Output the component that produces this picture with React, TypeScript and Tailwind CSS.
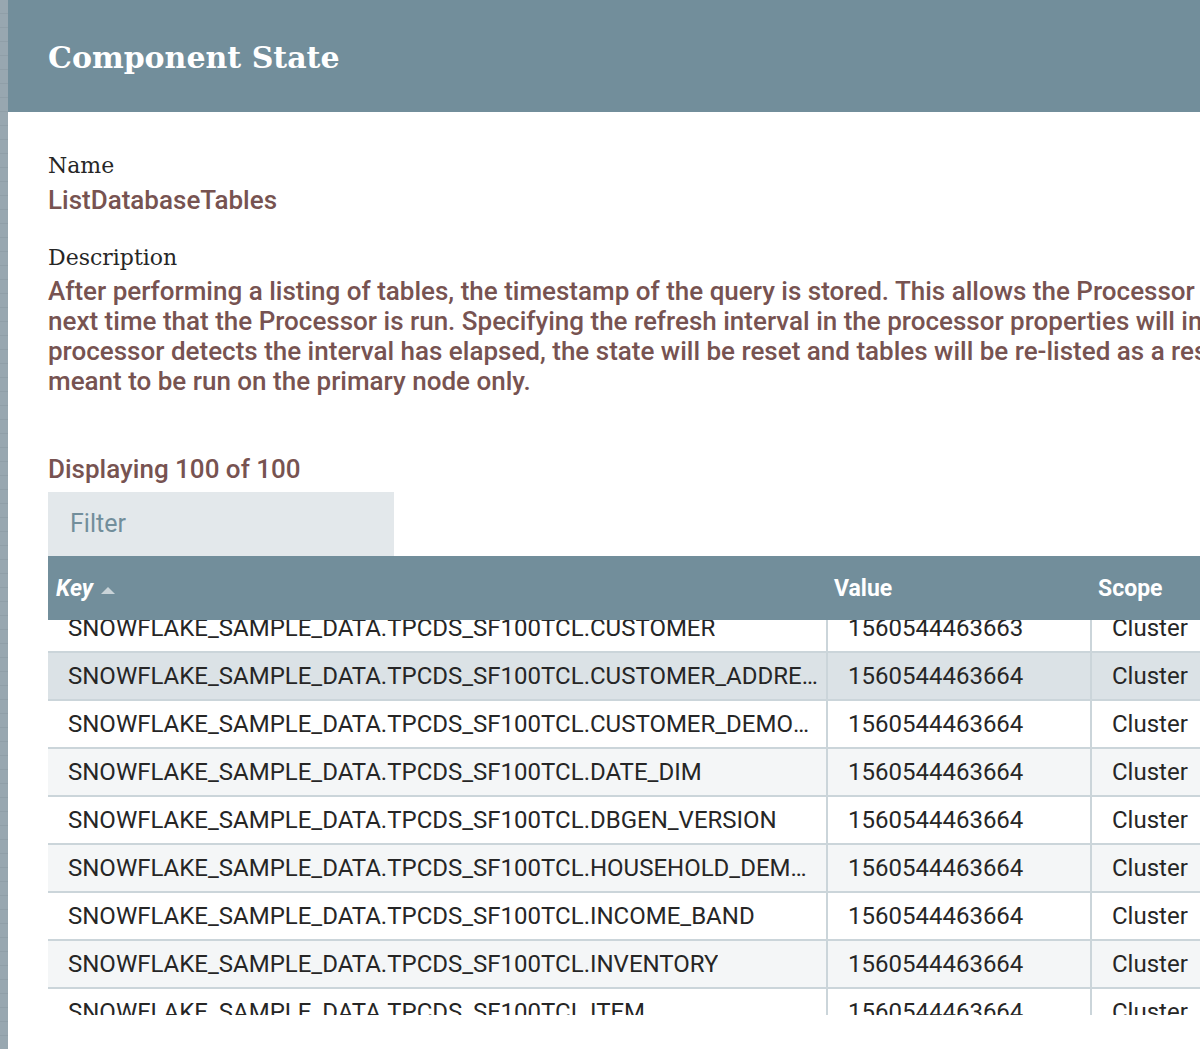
import React from "react";

const rows: { key: string; value: string; bg: string }[] = [
  { key: "SNOWFLAKE_SAMPLE_DATA.TPCDS_SF100TCL.CUSTOMER", value: "1560544463663", bg: "bg-white" },
  { key: "SNOWFLAKE_SAMPLE_DATA.TPCDS_SF100TCL.CUSTOMER_ADDRESS", value: "1560544463664", bg: "bg-[#dbe2e6]" },
  { key: "SNOWFLAKE_SAMPLE_DATA.TPCDS_SF100TCL.CUSTOMER_DEMOGRAPHICS", value: "1560544463664", bg: "bg-white" },
  { key: "SNOWFLAKE_SAMPLE_DATA.TPCDS_SF100TCL.DATE_DIM", value: "1560544463664", bg: "bg-[#f4f6f7]" },
  { key: "SNOWFLAKE_SAMPLE_DATA.TPCDS_SF100TCL.DBGEN_VERSION", value: "1560544463664", bg: "bg-white" },
  { key: "SNOWFLAKE_SAMPLE_DATA.TPCDS_SF100TCL.HOUSEHOLD_DEMOGRAPHICS", value: "1560544463664", bg: "bg-[#f4f6f7]" },
  { key: "SNOWFLAKE_SAMPLE_DATA.TPCDS_SF100TCL.INCOME_BAND", value: "1560544463664", bg: "bg-white" },
  { key: "SNOWFLAKE_SAMPLE_DATA.TPCDS_SF100TCL.INVENTORY", value: "1560544463664", bg: "bg-[#f4f6f7]" },
  { key: "SNOWFLAKE_SAMPLE_DATA.TPCDS_SF100TCL.ITEM", value: "1560544463664", bg: "bg-white" },
];

const descLines = [
  "After performing a listing of tables, the timestamp of the query is stored. This allows the Processor to not re-list tables the",
  "next time that the Processor is run. Specifying the refresh interval in the processor properties will indicate that when the",
  "processor detects the interval has elapsed, the state will be reset and tables will be re-listed as a result. This processor is",
  "meant to be run on the primary node only.",
];

export default function App() {
  return (
    <div className="flex w-[1200px] h-[1049px] overflow-hidden bg-white font-['Roboto',sans-serif]">
      <div className="w-[8px] shrink-0 bg-[repeating-linear-gradient(180deg,#98a7b0_0px,#98a7b0_13px,#909fa8_13px,#909fa8_14px)]" />
      <div className="flex flex-col w-[1700px] shrink-0 bg-white">
        <div className="h-[112px] bg-[#728e9b] flex items-center pl-[40px]">
          <h1 className="text-white font-['DejaVu_Serif',serif] font-bold text-[30px] leading-none mt-[4px]">
            Component State
          </h1>
        </div>
        <div className="pl-[40px] pt-[39px] flex flex-col">
          <div className="font-['DejaVu_Serif',serif] text-[22px] leading-[30px] text-[#262626]">Name</div>
          <div className="text-[26px] leading-[34px] text-[#775351] font-medium mt-[2px]">ListDatabaseTables</div>
          <div className="font-['DejaVu_Serif',serif] text-[22px] leading-[30px] text-[#262626] mt-[26px]">Description</div>
          <div className="text-[26px] leading-[30px] text-[#775351] font-medium mt-[3px]">
            {descLines.map((l, i) => (
              <div key={i} className="whitespace-nowrap">{l}</div>
            ))}
          </div>
          <div className="text-[26px] leading-[30px] text-[#775351] font-medium mt-[58px]">Displaying 100 of 100</div>
          <div className="mt-[8px] w-[346px] h-[64px] bg-[#e3e8eb] flex items-center pl-[22px] text-[25px] text-[#728e9b]">
            Filter
          </div>
          <div className="w-[1300px] flex flex-col">
            <div className="h-[64px] bg-[#728e9b] flex items-center text-white font-bold text-[23px] pt-[2px]">
              <div className="w-[780px] pl-[8px] flex items-center gap-[8px]">
                <span className="italic">Key</span>
                <svg width="14" height="8" viewBox="0 0 14 8" className="mt-[2px]">
                  <path d="M0 8 L7 1 L14 8 Z" fill="#c9d3d8" />
                </svg>
              </div>
              <div className="w-[264px] pl-[6px]">Value</div>
              <div className="pl-[6px]">Scope</div>
            </div>
            <div className="h-[395px] overflow-hidden">
              <div className="-mt-[15px] flex flex-col">
                {rows.map((r, i) => (
                  <div
                    key={i}
                    className={`flex h-[48px] border-b-2 border-[#cbd5da] text-[24px] text-[#262626] ${r.bg}`}
                  >
                    <div className="w-[780px] shrink-0 pl-[20px] pr-[8px] flex items-center border-r-2 border-[#cbd5da] overflow-hidden">
                      <span className="block overflow-hidden text-ellipsis whitespace-nowrap">{r.key}</span>
                    </div>
                    <div className="w-[264px] shrink-0 pl-[20px] flex items-center border-r-2 border-[#cbd5da]">
                      {r.value}
                    </div>
                    <div className="pl-[20px] flex items-center">Cluster</div>
                  </div>
                ))}
              </div>
            </div>
          </div>
        </div>
      </div>
    </div>
  );
}
